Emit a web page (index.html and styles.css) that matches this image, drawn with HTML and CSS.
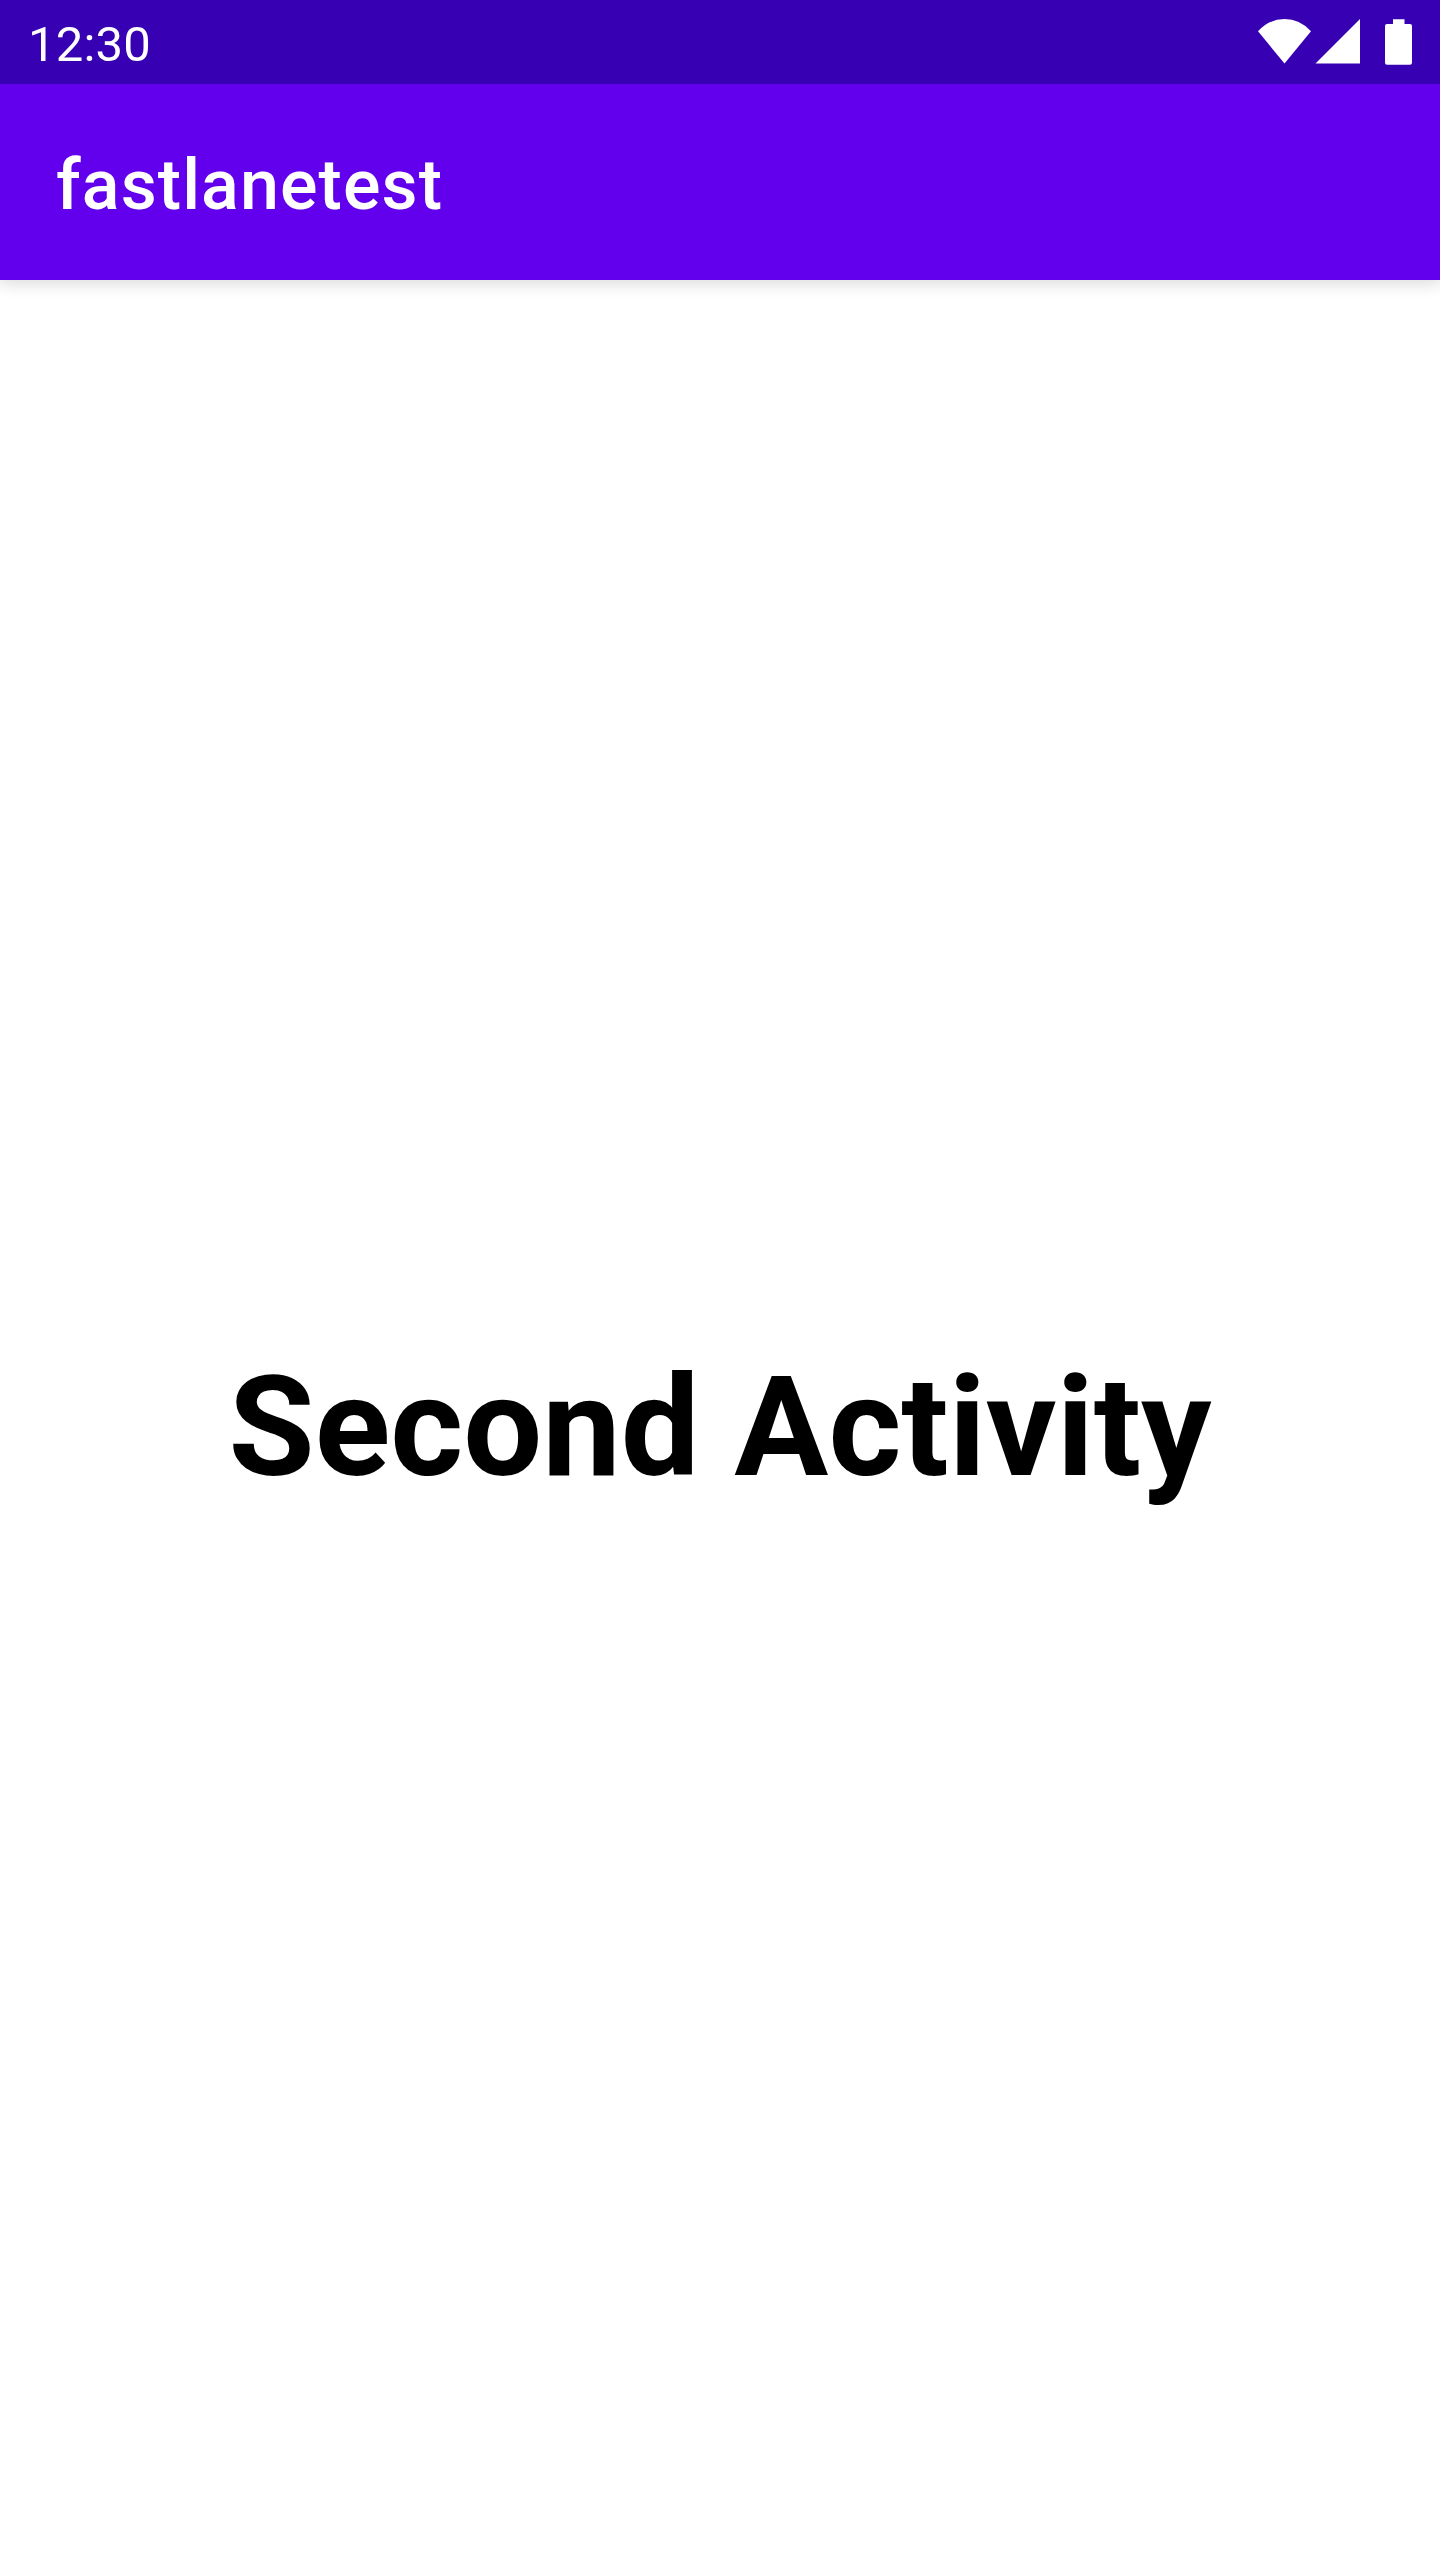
FILE: index.html
```
<!DOCTYPE html>
<html lang="en">
<head>
<meta charset="utf-8">
<title>fastlanetest</title>
<link rel="stylesheet" href="styles.css">
</head>
<body>
<div class="status-bar">
  <span class="clock">12:30</span>
  <svg class="status-icons" width="200" height="84" viewBox="0 0 200 84" fill="#fff" aria-hidden="true">
    <path d="M18 31.3Q29 19 44.500 19T71 31.300L44.500 63.500Z"/>
    <path d="M75.500 63.500L120 19V63.500Z"/>
    <path d="M153 19.300H164.500V24H170Q172 24 172 26V62.700Q172 64.700 170 64.700H147Q145 64.700 145 62.700V26Q145 24 147 24H153Z"/>
  </svg>
</div>
<header class="app-bar"><h1 class="app-title">fastlanetest</h1></header>
<main class="content"><p class="message">Second Activity</p></main>
</body>
</html>
```
FILE: styles.css
```
body {
  margin: 0;
  height: 2560px;
  display: flex;
  flex-direction: column;
  background: #fff;
  font-family: Roboto, sans-serif;
}
.status-bar {
  position: relative;
  z-index: 1;
  box-sizing: border-box;
  height: 84px;
  display: flex;
  align-items: center;
  justify-content: space-between;
  padding-left: 28px;
  background: #3700b3;
  color: #fff;
}
.clock { padding-top: 4px; font-size: 49px; letter-spacing: .2px; }
.app-bar {
  box-sizing: border-box;
  height: 196px;
  display: flex;
  align-items: center;
  padding: 6px 0 0 56px;
  background: #6200ee;
  color: #fff;
  box-shadow: 0 4px 14px 1px rgba(0, 0, 0, .13);
}
.app-title { margin: 0; font-size: 70px; font-weight: 500; letter-spacing: 1.1px; }
.content { flex: 1; display: flex; align-items: center; justify-content: center; padding-top: 14px; }
.message { margin: 0; font-size: 140px; font-weight: 700; color: #000; white-space: nowrap; }
```
